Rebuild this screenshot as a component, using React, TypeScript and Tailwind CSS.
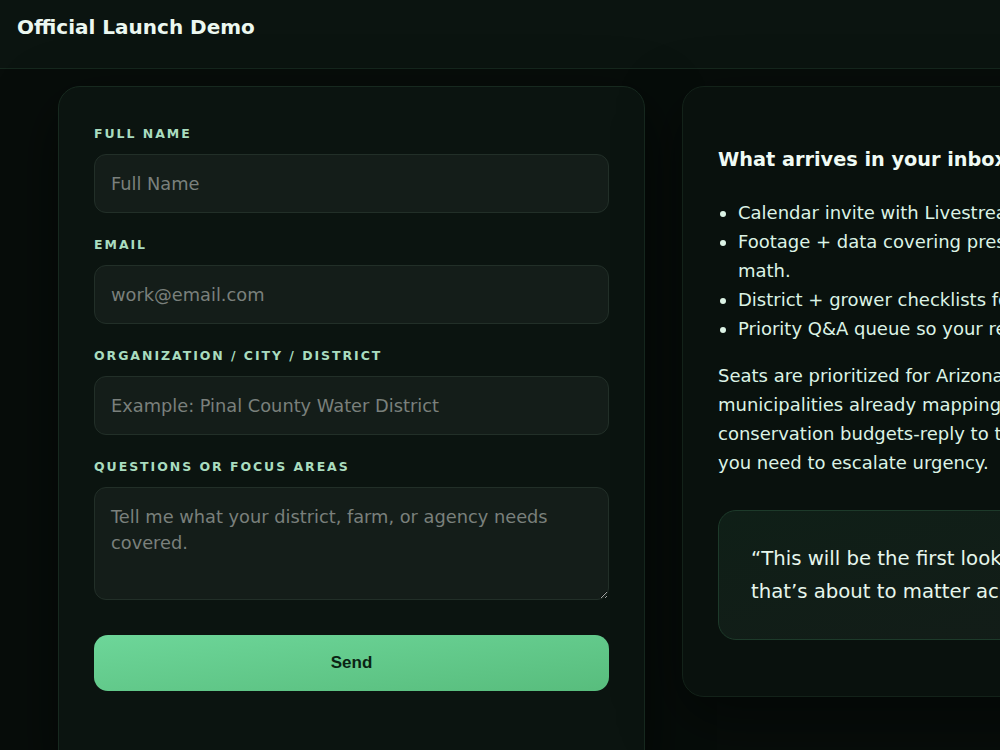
import React from "react";

const labelCls =
  "block text-[12.5px] leading-[16px] font-bold uppercase tracking-[1.95px] text-[#a9dcbf] mb-[12px]";
const inputCls =
  "w-full h-[59px] rounded-[12px] border border-[#222f28] bg-[#141d19] px-[16px] text-[17.8px] text-[#d9e6de] placeholder:text-[#7a807c] outline-none";

export default function App() {
  return (
    <div className="min-h-screen w-[1000px] overflow-hidden bg-[#070d0a] font-['DejaVu_Sans',sans-serif]">
      <header className="h-[69px] border-b border-[#16281e] bg-[#0b1410] px-[17px] pt-[11px]">
        <h1 className="text-[20px] leading-[32px] font-bold text-[#ecf8f0]">Official Launch Demo</h1>
      </header>
      <main className="flex items-start gap-[37px] pl-[58px] pt-[17px]">
        <section className="w-[587px] shrink-0 rounded-[22px] border border-[#17291f] bg-[#0b1410] px-[35px] pt-[39px] pb-[80px] shadow-[0_20px_60px_rgba(0,0,0,0.55)]">
          <form className="flex flex-col gap-[24px]" onSubmit={(e) => e.preventDefault()}>
            <div>
              <label className={labelCls}>Full Name</label>
              <input className={inputCls} placeholder="Full Name" />
            </div>
            <div>
              <label className={labelCls}>Email</label>
              <input className={inputCls} placeholder="work@email.com" />
            </div>
            <div>
              <label className={labelCls}>Organization / City / District</label>
              <input className={inputCls} placeholder="Example: Pinal County Water District" />
            </div>
            <div>
              <label className={labelCls}>Questions or focus areas</label>
              <textarea
                className="block w-full h-[113px] rounded-[12px] border border-[#222f28] bg-[#141d19] px-[16px] pt-[16px] text-[17.8px] leading-[26px] text-[#d9e6de] placeholder:text-[#7a807c] outline-none"
                placeholder="Tell me what your district, farm, or agency needs covered."
              />
            </div>
            <button
              type="submit"
              className="mt-[11px] h-[56px] w-full rounded-[14px] bg-gradient-to-br from-[#6dd699] to-[#58bd7d] font-['Liberation_Sans',sans-serif] text-[17px] font-bold text-[#0b2414]"
            >
              Send
            </button>
          </form>
        </section>
        <section className="w-[587px] shrink-0 rounded-[22px] border border-[#132219] bg-[#09110d] px-[35px] pt-[59px] pb-[56px] shadow-[0_20px_60px_rgba(0,0,0,0.5)]">
          <h2 className="mb-[24px] whitespace-nowrap text-[19.3px] leading-[28px] font-bold text-[#f0fbf4]">
            What arrives in your inbox
          </h2>
          <ul className="list-disc whitespace-nowrap pl-[20px] text-[18px] leading-[29px] text-[#dcf3e5]">
            <li>Calendar invite with Livestream link + replay.</li>
            <li>
              Footage + data covering pressure zones and ROI
              <br />
              math.
            </li>
            <li>District + grower checklists for day one.</li>
            <li>Priority Q&amp;A queue so your requests land first.</li>
          </ul>
          <p className="mt-[18px] whitespace-nowrap text-[18px] leading-[29px] text-[#dcf3e5]">
            Seats are prioritized for Arizona districts, growers, and
            <br />
            municipalities already mapping drought plans and
            <br />
            conservation budgets-reply to this email if
            <br />
            you need to escalate urgency.
          </p>
          <blockquote className="mt-[33px] whitespace-nowrap rounded-[18px] border border-[#1d3a2a] bg-gradient-to-br from-[#0f1f17] to-[#131c18] px-[32px] py-[31px] text-[19.7px] leading-[33px] font-medium text-[#e6f6ec]">
            “This will be the first look at the water math
            <br />
            that’s about to matter across the state.”
          </blockquote>
        </section>
      </main>
    </div>
  );
}
